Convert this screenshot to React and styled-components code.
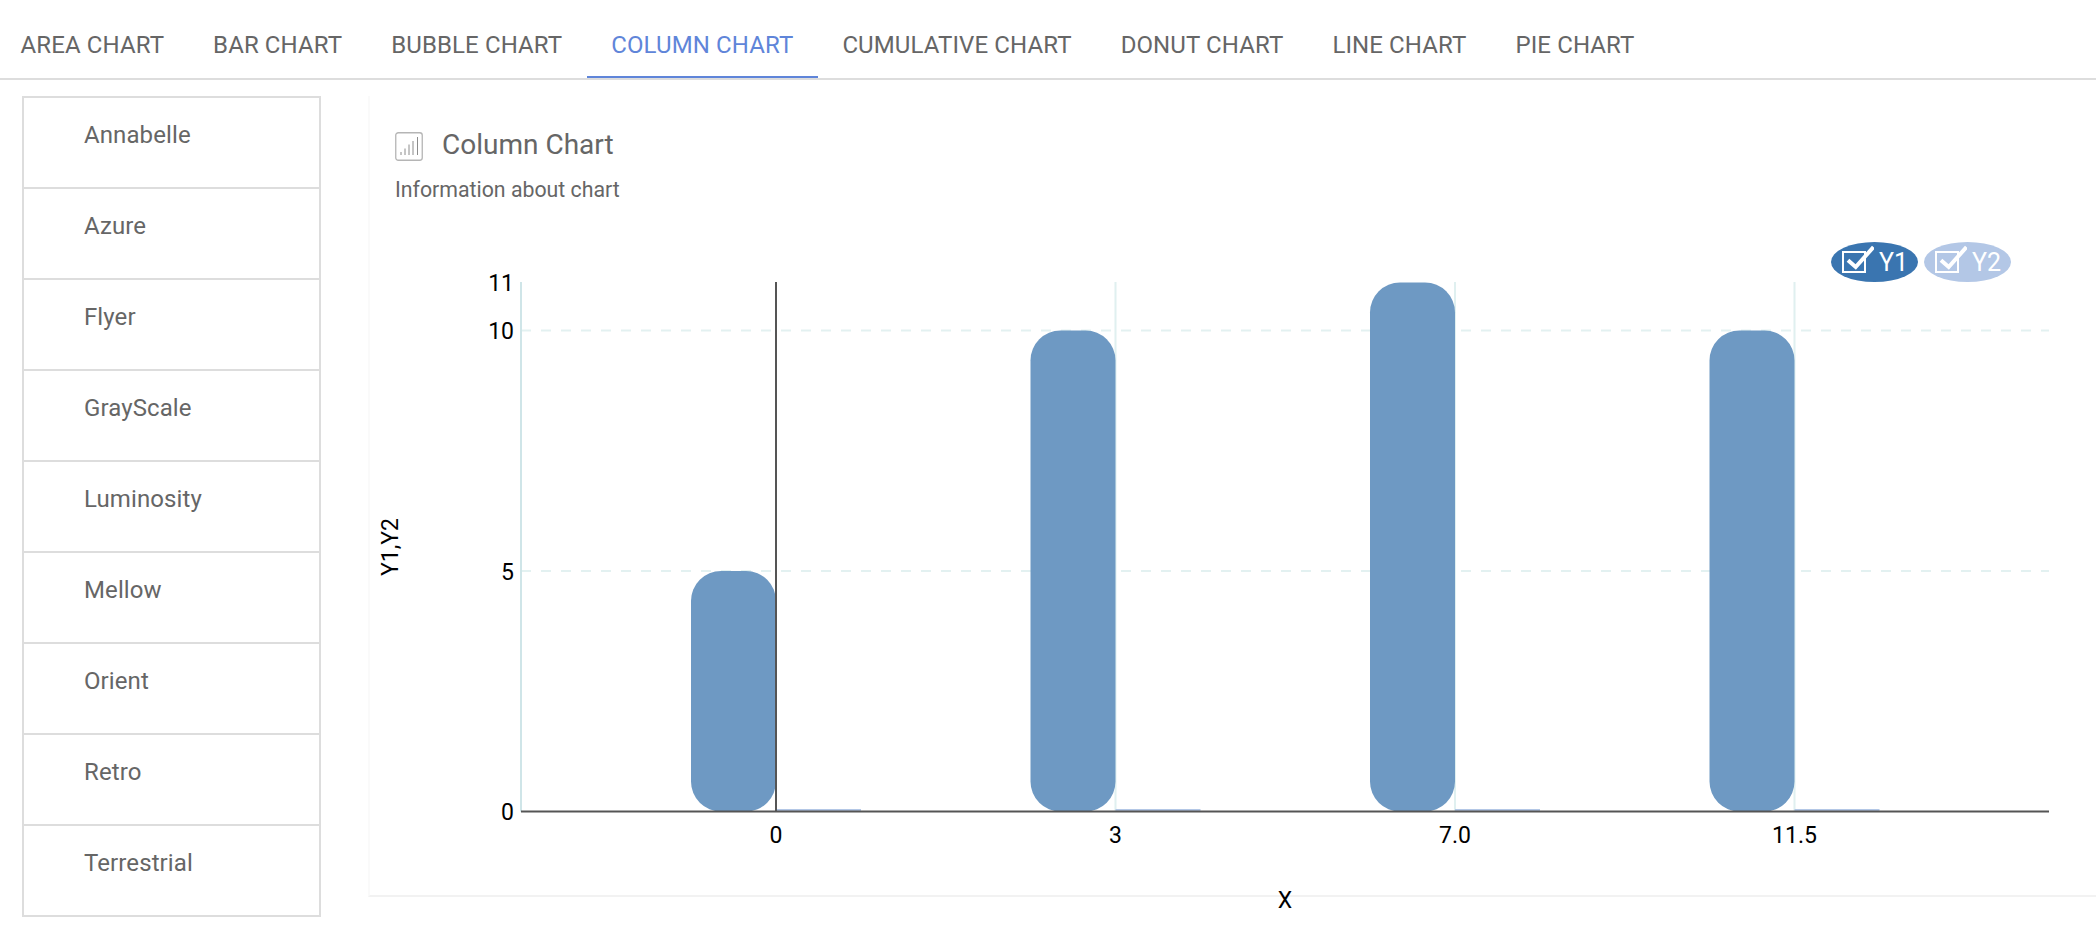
import React from 'react';
import styled, { createGlobalStyle } from 'styled-components';

const Global = createGlobalStyle`
  html, body { margin: 0; padding: 0; background: #fff; height: 934px; overflow: hidden; }
  body { font-family: Roboto, "Liberation Sans", sans-serif; color: #666; }
  * { box-sizing: border-box; }
`;

const Page = styled.div`width: 2096px; height: 934px; overflow: hidden; background: #fff;`;

const TabBar = styled.nav`
  display: flex;
  height: 80px;
  padding-left: 0;
  margin-left: -4px;
  border-bottom: 2px solid #ddd;
`;

const Tab = styled.a`
  display: flex;
  align-items: center;
  height: 78px;
  padding: 13px 24.5px 0;
  font-size: 24px;
  letter-spacing: 0.11px;
  font-weight: 400;
  white-space: nowrap;
  color: ${p => (p.$active ? '#5f85d9' : '#666')};
  border-bottom: 2px solid ${p => (p.$active ? '#5f85d9' : 'transparent')};
`;

const Body = styled.div`
  display: flex;
  align-items: flex-start;
  padding: 16px 0 0 22px;
`;

const ThemeList = styled.ul`
  list-style: none;
  margin: 0;
  padding: 0;
  width: 299px;
  flex: none;
  border: 2px solid #ddd;
  border-bottom-width: 0;
`;

const ThemeItem = styled.li`
  height: 91px;
  padding: 21px 0 0 60px;
  font-size: 24px;
  letter-spacing: 0.1px;
  line-height: 32px;
  color: #666;
  border-bottom: 2px solid #ddd;
`;

const Panel = styled.section`
  flex: 1;
  height: 801px;
  margin-left: 47px;
  padding: 35px 0 0 25px;
  border-left: 2px solid #fafafa;
  border-bottom: 2px solid #f2f2f2;
  position: relative;
`;

const TitleRow = styled.div`
  display: flex;
  align-items: center;
  gap: 19px;
  height: 30px;
`;

const Title = styled.h2`
  margin: 0 0 3px;
  font-size: 28px;
  font-weight: 400;
  color: #666;
  line-height: 27px;
`;

const Info = styled.p`
  margin: 15px 0 0;
  font-size: 21.3px;
  line-height: 28px;
  color: #666;
`;

const ChartWrap = styled.div`
  position: relative;
  margin: 38px 0 0 -25px;
`;

const Chart = styled.svg`
  display: block;
  overflow: visible;
`;

const Legend = styled.div`
  position: absolute;
  top: 0;
  right: 85px;
  display: flex;
  gap: 6px;
`;

const Pill = styled.div`
  width: 87px;
  height: 40px;
  padding-left: 11px;
  border-radius: 50%;
  display: flex;
  align-items: center;
  gap: 5px;
  color: #fff;
  font-size: 25px;
  background: ${p => p.$color};
`;

const CheckIcon = () => (
  <svg width="32" height="30" viewBox="0 0 32 30" fill="none" style={{ flex: 'none', marginTop: -5 }}>
    <rect x="1" y="7" width="22" height="20" stroke="#fff" strokeWidth="2" fill="none" />
    <path d="M6 15.3 L13.7 22 L31.5 2" stroke="#fff" strokeWidth="4" fill="none" />
  </svg>
);

const ColumnIcon = () => (
  <svg width="28" height="29" viewBox="0 0 28 29" fill="none" style={{ flex: 'none' }}>
    <rect x="0.75" y="0.75" width="26.5" height="27.5" rx="2.5" stroke="#b5b5b5" strokeWidth="1.3" />
    <path d="M6 23V20M10 23V16.5M14 23V12.5M18 23V9M22.5 23V5" stroke="#8c8c8c" strokeWidth="1" />
  </svg>
);

const tabs = ['AREA CHART', 'BAR CHART', 'BUBBLE CHART', 'COLUMN CHART', 'CUMULATIVE CHART', 'DONUT CHART', 'LINE CHART', 'PIE CHART'];
const themes = ['Annabelle', 'Azure', 'Flyer', 'GrayScale', 'Luminosity', 'Mellow', 'Orient', 'Retro', 'Terrestrial'];

// chart coords are page px minus the chart origin
const OX = 370;
const OY = 242;
const X = v => v - OX;
const Y = v => v - OY;
const base = 811.5;
const unit = 48.1;
const ticks = [776, 1115.5, 1455, 1794.5];
const labels = ['0', '3', '7.0', '11.5'];
const values = [5, 10, 11, 10];
const topPx = v => base - v * unit;

const barPath = (x0, x1, top, r) =>
  `M${X(x0)} ${Y(top + r)}A${r} ${r} 0 0 1 ${X(x0 + r)} ${Y(top)}H${X(x1 - r)}A${r} ${r} 0 0 1 ${X(x1)} ${Y(top + r)}` +
  `V${Y(base - r)}A${r} ${r} 0 0 1 ${X(x1 - r)} ${Y(base)}H${X(x0 + r)}A${r} ${r} 0 0 1 ${X(x0)} ${Y(base - r)}Z`;

const textStyle = { fontFamily: 'Roboto, sans-serif', fontSize: 23, fill: '#000' };

export default function App() {
  return (
    <Page>
      <Global />
      <TabBar>
        {tabs.map(t => (
          <Tab key={t} $active={t === 'COLUMN CHART'}>{t}</Tab>
        ))}
      </TabBar>
      <Body>
        <ThemeList>
          {themes.map(t => <ThemeItem key={t}>{t}</ThemeItem>)}
        </ThemeList>
        <Panel>
          <TitleRow>
            <ColumnIcon />
            <Title>Column Chart</Title>
          </TitleRow>
          <Info>Information about chart</Info>
          <ChartWrap>
            <Legend>
              <Pill $color="#3a75b0"><CheckIcon />Y1</Pill>
              <Pill $color="#b3c7e6"><CheckIcon />Y2</Pill>
            </Legend>
            <Chart width="1726" height="670" viewBox="0 0 1726 670">
              {[10, 5].map(v => (
                <line key={v} x1={X(521)} x2={X(2049)} y1={Y(topPx(v))} y2={Y(topPx(v))} stroke="#e3f1f1" strokeWidth="2" strokeDasharray="10 10" />
              ))}
              {ticks.slice(1).map(t => (
                <line key={t} x1={X(t)} x2={X(t)} y1={Y(282)} y2={Y(base)} stroke="#e0f0f0" strokeWidth="2" />
              ))}
              <line x1={X(521)} x2={X(521)} y1={Y(282)} y2={Y(base)} stroke="#cfe5e8" strokeWidth="2" />
              {ticks.map((t, i) => (
                <g key={t}>
                  <path d={barPath(t - 85, t, topPx(values[i]), 30)} fill="#6e99c3" />
                  <rect x={X(t)} y={Y(base - 2.5)} width="85" height="2" fill="#b3c7e6" />
                </g>
              ))}
              <line x1={X(776)} x2={X(776)} y1={Y(282)} y2={Y(base)} stroke="#555" strokeWidth="2" />
              <line x1={X(521)} x2={X(2049)} y1={Y(base)} y2={Y(base)} stroke="#555" strokeWidth="2" />
              {[[11, '11'], [10, '10'], [5, '5'], [0, '0']].map(([v, s]) => (
                <text key={s} x={X(514)} y={Y(topPx(v)) + 8.5} textAnchor="end" style={textStyle}>{s}</text>
              ))}
              {ticks.map((t, i) => (
                <text key={t} x={X(t)} y={Y(843)} textAnchor="middle" style={textStyle}>{labels[i]}</text>
              ))}
              <text transform={`translate(${X(398)} ${Y(547)}) rotate(-90)`} textAnchor="middle" style={textStyle}>Y1,Y2</text>
              <text x={X(1285)} y={Y(908)} textAnchor="middle" style={textStyle}>X</text>
            </Chart>
          </ChartWrap>
        </Panel>
      </Body>
    </Page>
  );
}
